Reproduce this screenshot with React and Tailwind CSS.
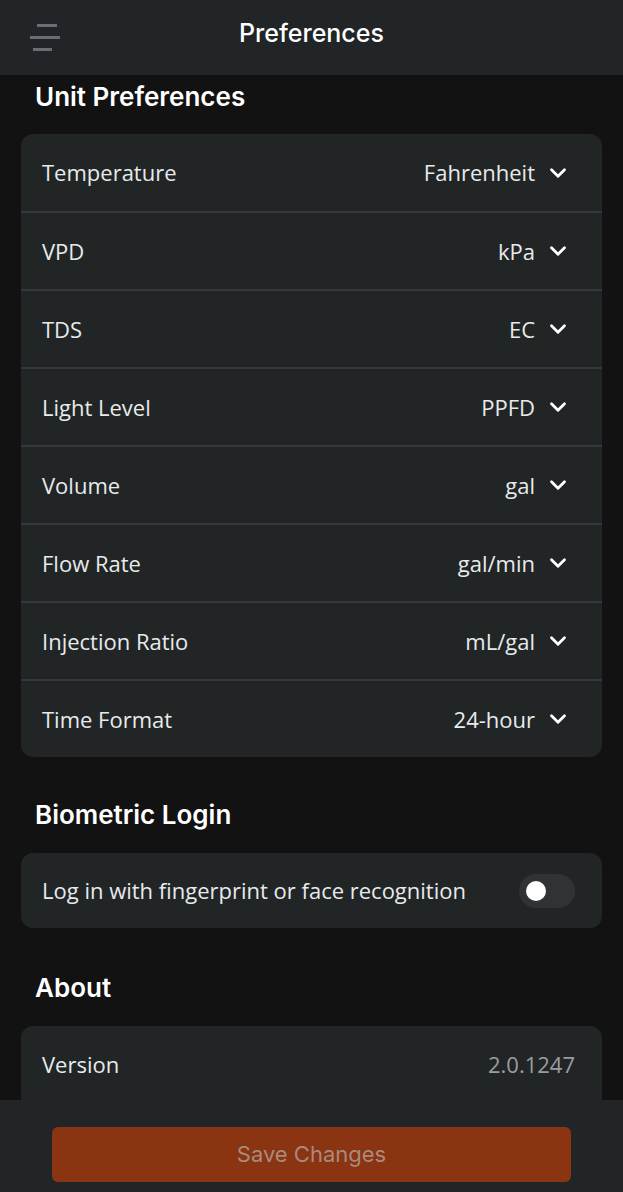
import { ChevronDown } from "lucide-react";

const units = [
  { label: "Temperature", value: "Fahrenheit" },
  { label: "VPD", value: "kPa" },
  { label: "TDS", value: "EC" },
  { label: "Light Level", value: "PPFD" },
  { label: "Volume", value: "gal" },
  { label: "Flow Rate", value: "gal/min" },
  { label: "Injection Ratio", value: "mL/gal" },
  { label: "Time Format", value: "24-hour" },
];

function SectionTitle({ children, className = "" }) {
  return (
    <h2
      className={`px-[35px] text-[26px] font-semibold text-white font-['Inter',sans-serif] ${className}`}
    >
      {children}
    </h2>
  );
}

export default function App() {
  return (
    <div className="h-screen flex flex-col bg-[#121212] font-['Open_Sans',sans-serif] overflow-hidden">
      {/* top bar */}
      <header className="h-[75px] shrink-0 bg-[#212527] flex items-center px-[30px] pb-[8px]">
        <div className="flex flex-col gap-[9px] w-[30px] mt-[8px]">
          <span className="block h-[3px] w-[20px] ml-[7px] bg-[#6a6e72]" />
          <span className="block h-[3px] w-[30px] bg-[#6a6e72]" />
          <span className="block h-[3px] w-[19px] ml-[3px] bg-[#6a6e72]" />
        </div>
        <h1 className="flex-1 text-center pr-[30px] text-[25px] font-medium text-white font-['Inter',sans-serif]">
          Preferences
        </h1>
      </header>

      {/* scrolling content */}
      <main className="flex-1 overflow-hidden">
        <SectionTitle className="pt-[6px] leading-[32px]">Unit Preferences</SectionTitle>
        <div className="mx-[21px] mt-[21px] rounded-[12px] bg-[#212526] overflow-hidden">
          {units.map((u, i) => (
            <div
              key={u.label}
              className={`flex items-center justify-between pl-[21px] pr-[31px] ${
                i > 0 ? "h-[78px] border-t-2 border-[#35393b]" : "h-[77px]"
              }`}
            >
              <span className="text-[22px] text-[#e8eaeb]">{u.label}</span>
              <span className="flex items-center gap-[10px] text-[22px] text-[#e8eaeb]">
                {u.value}
                <ChevronDown size={26} strokeWidth={2.6} className="text-white" />
              </span>
            </div>
          ))}
        </div>

        <SectionTitle className="mt-[42px] leading-[32px]">Biometric Login</SectionTitle>
        <div className="mx-[21px] mt-[22px] h-[75px] rounded-[12px] bg-[#212526] flex items-center justify-between pl-[21px] pr-[27px]">
          <span className="text-[22px] text-[#e8eaeb]">
            Log in with fingerprint or face recognition
          </span>
          <div className="w-[56px] h-[34px] rounded-full bg-[#2f3335] flex items-center px-[7px]">
            <span className="block w-[20px] h-[20px] rounded-full bg-white" />
          </div>
        </div>

        <SectionTitle className="mt-[44px] leading-[32px]">About</SectionTitle>
        <div className="mx-[21px] mt-[22px] rounded-[12px] bg-[#212526]">
          <div className="h-[76px] flex items-center justify-between pl-[21px] pr-[27px]">
            <span className="text-[22px] text-[#e8eaeb]">Version</span>
            <span className="text-[22px] text-[#9a9d9f]">2.0.1247</span>
          </div>
          <div className="h-[76px] border-t-2 border-[#35393b]" />
        </div>
      </main>

      {/* bottom action bar */}
      <footer className="h-[92px] shrink-0 bg-[#212527] flex items-start justify-center pt-[27px]">
        <button className="w-[519px] h-[55px] rounded-[6px] bg-[#8a3412] text-[22px] text-[#a98a7c] font-['Inter',sans-serif]">
          Save Changes
        </button>
      </footer>
    </div>
  );
}
